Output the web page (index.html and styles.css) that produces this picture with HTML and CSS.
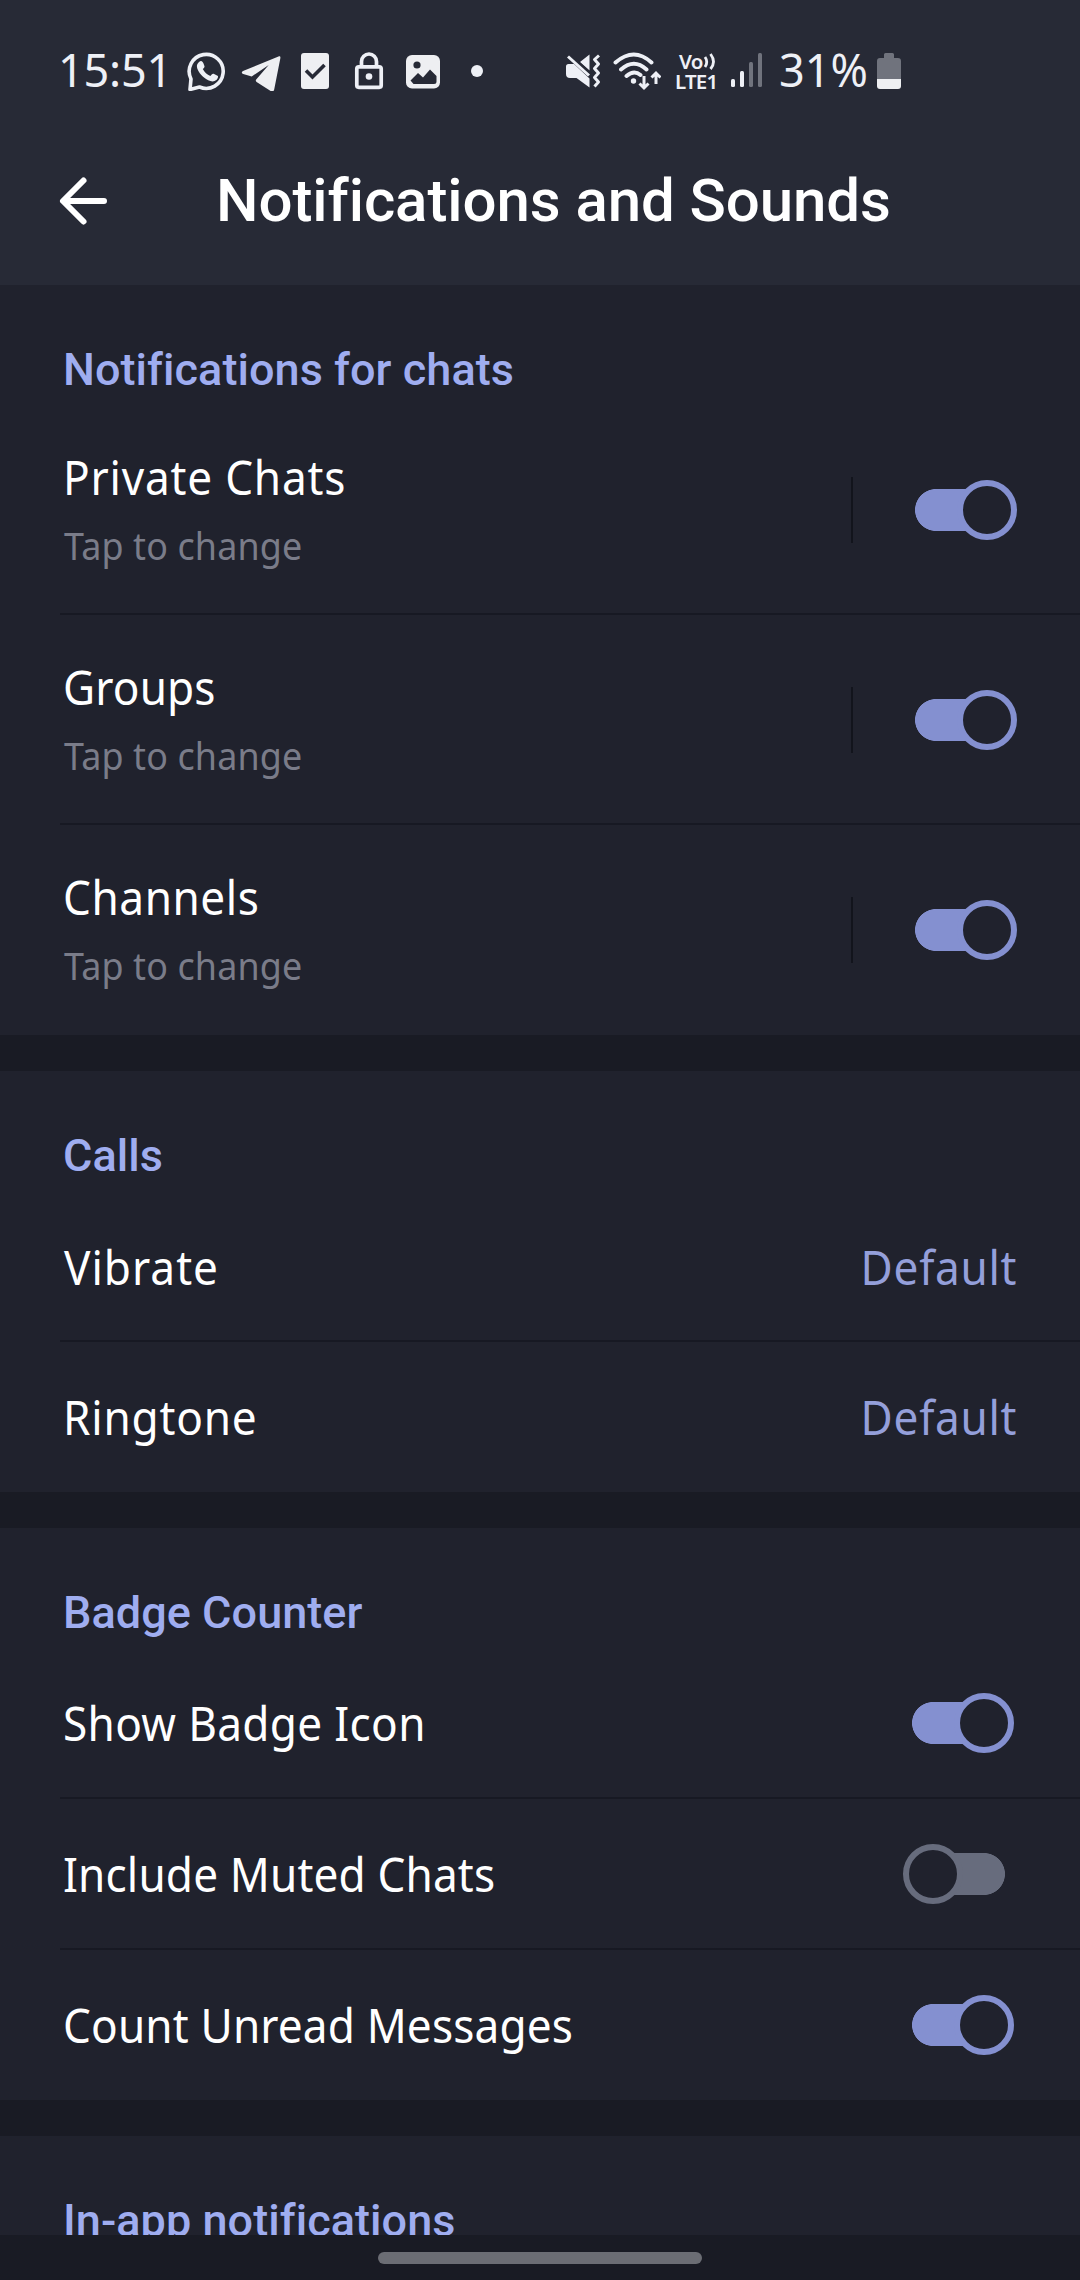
FILE: index.html
```html
<!DOCTYPE html>
<html lang="en">
<head>
<meta charset="utf-8">
<title>Notifications and Sounds</title>
<link rel="stylesheet" href="styles.css">
</head>
<body>
<div class="screen">
  <header class="header">
    <div class="statusbar">
      <span class="clock">15:51</span>
      <div class="status-left">
        <svg width="40" height="40" viewBox="0 0 40 40">
          <path d="M3 38.500l1-10.500A17 17 0 1 1 12.500 36z" fill="none" stroke="#eef0f6" stroke-width="3.600" stroke-linejoin="round"/>
          <path d="M12 11c2-1.800 3.500-1 4.500 1.500l1 2.800c.3 1-.9 2-1.700 2.800 1.700 3.300 4.200 5.500 7.600 6.800 1-1 2-2.600 3.200-2.100l3.900 1.900c1.300.7 0 3.300-1.200 4.400-3.300 2.800-8.300.8-12.300-2.500-4-3.400-7.800-8.700-7-12.600.3-1.200 1-2.100 2-3z" fill="#eef0f6"/>
        </svg>
        <svg width="40" height="40" viewBox="0 0 40 40">
          <path d="M37.500 5.400L2 20c-1.700.8-1.500 2.300.2 2.900l8.500 2.600 17-11.500-12.500 14.500c-.8.900-.4 1.700.4 2.400l14.200 9.200c1.800 1 3 .2 3.400-1.600l6.100-31c.4-2-.4-2.800-1.800-2.100z" fill="#eeeff2"/>
        </svg>
        <svg width="30" height="40" viewBox="0 0 30 40">
          <rect x="1" y="2" width="28" height="36" rx="3" fill="#eeeff2"/>
          <path d="M6 19.500l6.500 6.500L24.500 14" fill="none" stroke="#272a36" stroke-width="3.600"/>
        </svg>
        <svg width="30" height="40" viewBox="0 0 30 40">
          <rect x="2.800" y="15.800" width="24.400" height="20.500" rx="2" fill="none" stroke="#eef0f6" stroke-width="3.700"/>
          <path d="M7.500 15v-4.500a7.500 7.500 0 0 1 15 0V15" fill="none" stroke="#eef0f6" stroke-width="3.700"/>
          <circle cx="15" cy="25.500" r="3.300" fill="#eef0f6"/>
        </svg>
        <svg width="34" height="40" viewBox="0 0 34 40">
          <rect y="4" width="34" height="33.500" rx="6" fill="#eeeff2"/>
          <circle cx="11" cy="14" r="3.600" fill="#272a36"/>
          <path d="M4.500 29.500l7.500-7.500 5 4.500 7-8 6.500 6.500v5.500q0 2.500-2.500 2.500H7.500z" fill="#272a36"/>
        </svg>
        <i class="dot"></i>
      </div>
      <div class="status-right">
        <svg class="mute" width="36" height="40" viewBox="0 0 36 40">
          <path d="M1 15.500q0-2.500 2.500-2.500H9l15.500 14.500V36.500L11.500 27H5Q1 27 1 23zM15 11l9.500-7.500V19.500z" fill="#eef0f6"/>
          <path d="M4 3.500L26 23" stroke="#272a36" stroke-width="3"/>
          <path d="M3 5.500L24 24.500" stroke="#eef0f6" stroke-width="3"/>
          <path d="M34 4.500l-4.500 4 4 4.500-4 4.500 4 4.500-4 4.500 4 4.500-4 4.500" fill="none" stroke="#eef0f6" stroke-width="3" stroke-linejoin="round"/>
        </svg>
        <svg class="wifi" width="48" height="40" viewBox="0 0 48 40">
          <g fill="none" stroke="#eef0f6" stroke-width="3.900" stroke-linecap="round">
            <path d="M2.500 11.500Q21 -4.500 38.500 11.500M8 18.500Q21 7 33.500 18.500M13.500 25Q21 18.500 27.500 24"/>
            <path d="M31 25v12M26.500 32.500l4.500 4.500 4.500-4.500M43 33V22M38.500 26.500l4.500-4.500 4.500 4.500" stroke-width="3" stroke-linecap="butt"/>
          </g>
          <circle cx="20.500" cy="30" r="2.700" fill="#eef0f6"/>
        </svg>
        <div class="lte">
          <div class="lte-line">Vo<svg width="13" height="18" viewBox="0 0 13 18"><path d="M2 5q3.500 5 0 10M7.500 2q6 8 0 15" fill="none" stroke="#eef0f6" stroke-width="2.800"/></svg></div>
          <div class="lte-line lte-bottom">LTE1</div>
        </div>
        <svg class="signal" width="32" height="40" viewBox="0 0 32 40">
          <g fill="#eef0f6"><rect y="28" width="4" height="8" rx="1.500"/><rect x="9" y="20" width="4" height="16" rx="1.500"/></g>
          <g fill="#70737d"><rect x="18" y="11" width="4" height="25" rx="1.500"/><rect x="27" y="2" width="4" height="34" rx="1.500"/></g>
        </svg>
        <span class="percent">31%</span>
        <svg class="battery" width="24" height="40" viewBox="0 0 24 40">
          <path d="M3 7h4V3.500Q7 2 8.500 2h7Q17 2 17 3.500V7h4q3 0 3 3v18H0V10q0-3 3-3z" fill="#70737d"/>
          <path d="M0 28h24v7q0 3-3 3H3q-3 0-3-3z" fill="#eeeff2"/>
        </svg>
      </div>
    </div>
    <div class="titlebar">
      <svg class="back" width="50" height="50" viewBox="0 0 50 50">
        <path d="M25.500 4.500L5 25l20.500 20.500M6 25h40" fill="none" stroke="#fff" stroke-width="6" stroke-linecap="round" stroke-linejoin="round"/>
      </svg>
      <h1 class="title">Notifications and Sounds</h1>
    </div>
  </header>

  <main class="content">
    <section class="section">
      <h2 class="heading">Notifications for chats</h2>
      <div class="row row-tall">
        <div class="labels"><span class="label ls-wide">Private Chats</span><span class="hint">Tap to change</span></div>
        <i class="separator"></i><span class="switch"><i class="knob"></i></span>
      </div>
      <div class="row row-tall">
        <div class="labels"><span class="label">Groups</span><span class="hint">Tap to change</span></div>
        <i class="separator"></i><span class="switch"><i class="knob"></i></span>
      </div>
      <div class="row row-tall">
        <div class="labels"><span class="label ls-mid">Channels</span><span class="hint">Tap to change</span></div>
        <i class="separator"></i><span class="switch"><i class="knob"></i></span>
      </div>
    </section>

    <section class="section">
      <h2 class="heading">Calls</h2>
      <div class="row"><span class="label ls-vibrate">Vibrate</span><span class="value">Default</span></div>
      <div class="row"><span class="label ls-wide">Ringtone</span><span class="value">Default</span></div>
    </section>

    <section class="section">
      <h2 class="heading">Badge Counter</h2>
      <div class="row row-switch"><span class="label ls-badge">Show Badge Icon</span><span class="switch"><i class="knob"></i></span></div>
      <div class="row row-switch"><span class="label">Include Muted Chats</span><span class="switch off"><i class="knob"></i></span></div>
      <div class="row row-switch"><span class="label">Count Unread Messages</span><span class="switch"><i class="knob"></i></span></div>
    </section>

    <section class="section">
      <h2 class="heading">In-app notifications</h2>
    </section>
  </main>

  <footer class="navbar"><i class="handle"></i></footer>
</div>
</body>
</html>
```
FILE: styles.css
```css
* { box-sizing: border-box; margin: 0; padding: 0; }
body { background: #191b24; }
svg { display: block; flex: none; }
i { display: block; flex: none; }

.screen {
  width: 1080px;
  height: 2280px;
  display: flex;
  flex-direction: column;
  overflow: hidden;
  color: #fff;
  font-family: "Noto Sans", sans-serif;
}

.header { height: 285px; flex: none; background: #272a36; }

.statusbar {
  height: 116px;
  padding: 26px 0 0 58px;
  display: flex;
  align-items: center;
  color: #eef0f6;
}
.clock, .percent { font-size: 45px; line-height: 50px; white-space: nowrap; margin-top: -3px; }
.clock { width: 129px; letter-spacing: -.2px; }
.status-left { display: flex; align-items: center; width: 379px; }
.status-left svg:nth-child(2) { margin-left: 14px; }
.status-left svg:nth-child(3) { margin-left: 19px; }
.status-left svg:nth-child(4) { margin-left: 24px; }
.status-left svg:nth-child(5) { margin-left: 22px; }
.dot { width: 12px; height: 12px; border-radius: 6px; background: #eef0f6; margin-left: 31px; }
.status-right { display: flex; align-items: center; margin-left: -1px; }
.wifi { margin-left: 12px; }
.lte { width: 44px; margin-left: 14px; font-weight: 600; font-size: 20.500px; line-height: 20px; }
.lte-line { display: flex; align-items: center; height: 20px; padding-left: 4px; letter-spacing: -.8px; }
.lte-bottom { padding-left: 0; letter-spacing: -.8px; }
.signal { margin-left: 12px; }
.percent { width: 98px; margin-left: 16px; }

.titlebar { height: 169px; display: flex; align-items: center; padding-left: 58px; }
.title { margin-left: 108px; font: 500 60px/70px Roboto, sans-serif; letter-spacing: -.08px; }

.content {
  flex: none;
  height: 1950px;
  overflow: hidden;
  display: flex;
  flex-direction: column;
  gap: 36px;
}
.section { flex: none; background: #20222d; }
.heading {
  height: 120px;
  padding: 55px 0 0 63px;
  color: #9fadf0;
  font: 500 45px/60px Roboto, sans-serif;
  letter-spacing: .05px;
}
.section:last-child .heading { height: 180px; }

.row {
  height: 151px;
  padding: 0 63px 0 63px;
  display: flex;
  align-items: center;
  justify-content: space-between;
  background: linear-gradient(#171923, #171923) 60px 100% / 1020px 2px no-repeat;
}
.row:last-child { height: 150px; background: none; }
.row-tall, .row-tall:last-child { height: 210px; align-items: flex-start; }
.row-switch { padding-right: 66px; padding-bottom: 1px; }

/* Slightly condensed humanist lettering */
.label, .value, .hint { white-space: nowrap; transform: scaleX(.92); transform-origin: 0 50%; letter-spacing: .15px; }
.label, .value { font-size: 48px; line-height: 60px; }
.value { color: #949fda; letter-spacing: .75px; transform-origin: 100% 50%; }
.labels { flex: 1; padding-top: 42px; display: flex; flex-direction: column; gap: 13px; }
.hint { font-size: 39px; line-height: 50px; color: #7a7c89; padding-left: 1px; }
.label.ls-wide { letter-spacing: .85px; }
.label.ls-mid { letter-spacing: .6px; }
.label.ls-vibrate { letter-spacing: 1.100px; padding-left: 1px; }
.label.ls-badge { letter-spacing: .35px; }

.separator { width: 2px; height: 66px; margin: 72px 62px 0 0; background: #12141c; }

.switch {
  flex: none;
  width: 102px;
  height: 60px;
  display: flex;
  justify-content: flex-end;
  color: #8490d0;
  background: linear-gradient(currentColor, currentColor) 21px 50% / 60px 42px no-repeat,
              radial-gradient(circle at 21px 30px, currentColor 20.600px, transparent 21.300px);
}
.row-tall .switch { margin-top: 75px; }
.knob { width: 60px; height: 60px; border: 6px solid currentColor; border-radius: 50%; background: #20222d; }
.switch.off {
  justify-content: flex-start;
  margin-right: 9px;
  color: #676c7d;
  background: linear-gradient(currentColor, currentColor) 21px 50% / 60px 42px no-repeat,
              radial-gradient(circle at 81px 30px, currentColor 20.600px, transparent 21.300px);
}

.navbar { flex: 1; display: flex; justify-content: center; padding-top: 17px; background: #191b24; }
.handle { width: 324px; height: 12px; border-radius: 6px; background: #6b6d74; }
```
